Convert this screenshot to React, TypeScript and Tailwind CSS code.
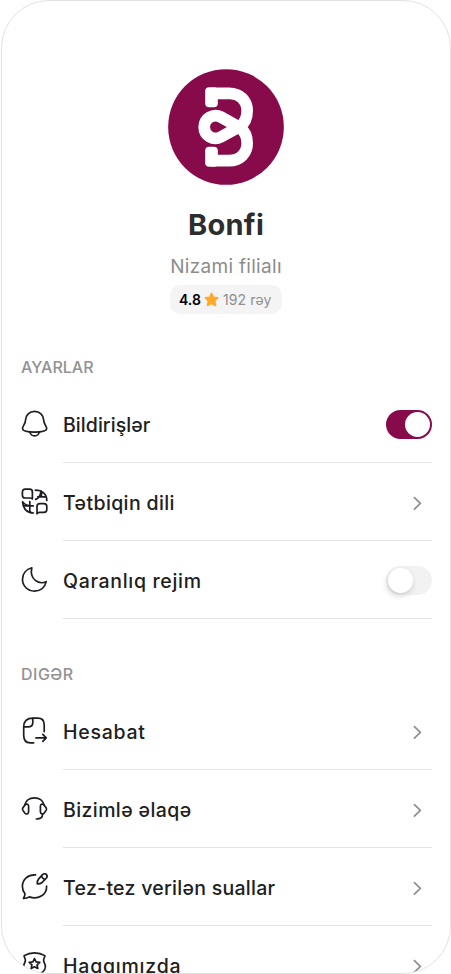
import type { ReactNode } from "react";

function Icon({ children }: { children: ReactNode }) {
  return (
    <svg
      className="h-7 w-7 shrink-0"
      viewBox="0 0 28 28"
      fill="none"
      stroke="#1c1c22"
      strokeWidth="1.7"
      strokeLinecap="round"
      strokeLinejoin="round"
    >
      {children}
    </svg>
  );
}

const BellIcon = () => (
  <Icon>
    <path d="M13.6 1.4C8.4 1.4 4.8 5.2 4.6 9.8C4.4 14.6 1.5 15.8 1.5 18.6C1.5 21.2 7 22.2 13.6 22.2S25.7 21.2 25.7 18.6C25.7 15.8 22.8 14.6 22.6 9.8C22.4 5.2 18.8 1.4 13.6 1.4Z" />
    <path d="M9 22.4C9.6 24.6 11.4 25.9 13.6 25.9S17.6 24.6 18.2 22.4" />
  </Icon>
);

const LanguageIcon = () => (
  <Icon>
    <path d="M4.2 1.2H8.6Q11.4 1.2 11.4 4V10.8Q10.4 10 9 10H4.2Q1.4 10 1.4 7.2V4Q1.4 1.2 4.2 1.2Z" />
    <path d="M14.4 2.2C21 2.2 25.8 6 25.8 12.4M14.6 11.4C17.6 10.2 19.6 7 20 2.8M16.8 8.8H24.6M20.4 3.4V8.8" />
    <path d="M1.6 13.8C1.6 20.4 6 25 12.4 25M1.8 13.8C3.6 17 6.6 18 12.2 18M8.8 13.6V24M2.8 17.8H12.2" />
    <path d="M18.8 15.6H23Q25.8 15.6 25.8 18.4V21.6Q25.8 24.4 23 24.4H18.6Q16.8 24.4 16 25.8V18.4Q16 15.6 18.8 15.6Z" />
  </Icon>
);

const MoonIcon = () => (
  <Icon>
    <path d="M10.8 1.8C5.2 3.3 1.5 7.8 1.5 13.3C1.5 20.1 6.8 25.1 13.4 25.1C19.4 25.1 24 21.5 25.2 15.7C18 18.9 8.2 13.7 10.8 1.8Z" />
  </Icon>
);

const ReportIcon = () => (
  <Icon>
    <path d="M23.2 14.6V7.8C23.2 3 21.4 1.2 16.8 1.2H12C6 1.2 2.7 4.2 2.7 10.2V18C2.7 23.4 4.6 25.9 9.2 25.9H12.6" />
    <path d="M11.8 1.4V5.4C11.8 8.4 10.2 9.8 7 9.8H2.9" />
    <path d="M15 20.9H25M21.8 17.4L25.2 20.9L21.8 24.4" />
  </Icon>
);

const HeadsetIcon = () => (
  <Icon>
    <path d="M3.8 9.7C4.8 5.6 8.6 2.8 13.4 2.8S22 5.6 23 9.7" />
    <path d="M7.6 11.2C7.6 8.8 5 8.4 3.6 10.4L1.8 13C1.4 13.7 1.4 14.4 1.8 15.1L3.6 17.8C5 19.8 7.6 19.2 7.6 16.8Z" />
    <path d="M19.4 11.2C19.4 8.8 22 8.4 23.4 10.4L25.2 13C25.6 13.7 25.6 14.4 25.2 15.1L23.4 17.8C22 19.8 19.4 19.2 19.4 16.8Z" />
    <path d="M21.6 19.3C21.6 22.6 19.6 24 15.4 24" />
  </Icon>
);

const ChatIcon = () => (
  <Icon>
    <path d="M14.6 1.9C6.8 1.5 1.4 6.7 1.4 13.4C1.4 16.4 2.4 18.8 4 20.8C4 22.8 3.3 24 2.4 25.5C4.8 25.6 6.8 25 8.4 23.9C16.8 27.2 25.9 22 25.6 13.2" />
    <path d="M21.3 1.9C22.7.4 24.4.5 25.4 1.6C26.4 2.7 26.3 4.2 25 5.5L20.9 9.7C20 10.6 18.5 11 16.3 11C16.2 8.7 16.6 7.1 17.5 6.1ZM20.6 3.2C21.2 4.8 22.2 5.8 23.8 6.4" />
  </Icon>
);

const AboutIcon = () => (
  <Icon>
    <path d="M13.5 1.8C9.4 1.8 6.6 2.5 3.2 4.6C2.8 5.8 4.4 7.4 4.4 9.2C4.4 11.4 2.6 12.8 2.6 15.4C2.6 19.4 5.6 22.6 13.5 25.8C21.4 22.6 24.4 19.4 24.4 15.4C24.4 12.8 22.6 11.4 22.6 9.2C22.6 7.4 24.2 5.8 23.8 4.6C20.4 2.5 17.6 1.8 13.5 1.8Z" />
    <path d="M13.5 7.6L15.1 10.9L18.8 11.4L16.1 13.9L16.8 17.5L13.5 15.8L10.2 17.5L10.9 13.9L8.2 11.4L11.9 10.9Z" />
  </Icon>
);

function Chevron() {
  return (
    <svg
      className="mt-0.5 mr-2.5 h-4 w-[9px]"
      viewBox="0 0 9 16"
      fill="none"
      stroke="#8e8e8e"
      strokeWidth="1.7"
      strokeLinecap="round"
      strokeLinejoin="round"
    >
      <path d="M1.4 2.6L7.4 8.4L1.4 14.2" />
    </svg>
  );
}

function Toggle({ on }: { on: boolean }) {
  return on ? (
    <div className="mt-px flex h-[29px] w-[46px] items-center justify-end rounded-full bg-[#870b4b] pr-[2px]">
      <div className="h-[25px] w-[25px] rounded-full bg-white" />
    </div>
  ) : (
    <div className="mt-px flex h-[29px] w-[46px] items-center rounded-full bg-[#f2f2f2] pl-[2px]">
      <div className="h-[25px] w-[25px] rounded-full bg-white shadow-[-1px_3px_6px_rgba(0,0,0,0.16)]" />
    </div>
  );
}

function Row({
  icon,
  label,
  tracking,
  children,
}: {
  icon: ReactNode;
  label: string;
  tracking: string;
  children: ReactNode;
}) {
  return (
    <div className="flex h-[78px] shrink-0 items-stretch">
      <div className="flex w-[42px] shrink-0 items-center">{icon}</div>
      <div className="flex grow items-center justify-between border-b border-[#e4e4e4]">
        <span className={`pt-0.5 text-[19.5px] leading-6 font-medium whitespace-nowrap ${tracking}`}>{label}</span>
        {children}
      </div>
    </div>
  );
}

function BrandMark() {
  return (
    <svg className="h-[132px] w-[132px]" viewBox="0 0 396 396">
      <circle cx="198" cy="201" r="173.5" fill="#870b4b" />
      <g fill="#fff">
        <rect x="135.5" y="81.5" width="38" height="60" rx="12" />
        <rect x="135.5" y="260.5" width="38" height="60" rx="12" />
      </g>
      <path
        d="M155 100H207C240 100 261.5 122 261.5 152C261.5 172 254 189 240 199L182.5 231A34 34 0 1 1 182.5 171L240 203C254 213 261.5 230 261.5 250C261.5 280 240 302 207 302H155"
        fill="none"
        stroke="#fff"
        strokeWidth="35"
        strokeLinejoin="round"
      />
    </svg>
  );
}

export default function App() {
  return (
    <div className="h-[974px] w-[451px] overflow-hidden bg-white pl-px font-['Inter','Noto_Sans',sans-serif] text-[#202020]">
      <main className="flex h-[974px] w-[450px] flex-col overflow-hidden rounded-[48px] border border-[#e2e2e2] bg-white pr-[18px] pl-[19px]">
        <header className="-ml-px flex h-[284px] shrink-0 flex-col items-center pt-[59px]">
          <BrandMark />
        </header>
        <div className="-mt-[80px] -ml-px flex shrink-0 flex-col items-center">
          <h1 className="text-[29px] leading-[40px] font-bold tracking-[0.3px] text-[#2d2d2d]">Bonfi</h1>
          <p className="mt-[10px] text-[19px] leading-6 tracking-[0.3px] text-[#8c8c8c]">Nizami filialı</p>
          <div className="mt-[6px] flex h-[29px] w-[112px] items-center gap-1 rounded-[10px] bg-[#f4f4f4] pl-[9px]">
            <span className="w-[22px] text-[14px] leading-5 font-semibold text-black">4.8</span>
            <svg className="-ml-px h-[15px] w-[15px]" viewBox="0 0 24 24" fill="#ffa928" stroke="#ffa928" strokeWidth="2.5" strokeLinejoin="round">
              <path d="M12 2L15 8.5L22 9.3L17 14.2L18.5 21.5L12 18L5.5 21.5L7 14.2L2 9.3L9 8.5Z" />
            </svg>
            <span className="text-[14px] leading-5 tracking-[0.1px] whitespace-nowrap text-[#8e8e8e]">192 rəy</span>
          </div>
        </div>
        <section className="mt-[41px] shrink-0">
          <h2 className="h-[30px] text-[16px] leading-6 font-medium text-[#929292]">AYARLAR</h2>
          <Row icon={<BellIcon />} label="Bildirişlər" tracking="tracking-[0.05px]">
            <Toggle on />
          </Row>
          <Row icon={<LanguageIcon />} label="Tətbiqin dili" tracking="tracking-[0.38px]">
            <Chevron />
          </Row>
          <Row icon={<MoonIcon />} label="Qaranlıq rejim" tracking="tracking-[0.68px]">
            <Toggle on={false} />
          </Row>
        </section>
        <section className="mt-[43px] shrink-0">
          <h2 className="h-[30px] text-[16px] leading-6 font-medium tracking-[0.5px] text-[#929292]">DIGƏR</h2>
          <Row icon={<ReportIcon />} label="Hesabat" tracking="tracking-[0.74px]">
            <Chevron />
          </Row>
          <Row icon={<HeadsetIcon />} label="Bizimlə əlaqə" tracking="tracking-[0.4px]">
            <Chevron />
          </Row>
          <Row icon={<ChatIcon />} label="Tez-tez verilən suallar" tracking="tracking-[0.28px]">
            <Chevron />
          </Row>
          <Row icon={<AboutIcon />} label="Haqqımızda" tracking="tracking-[0.78px]">
            <Chevron />
          </Row>
        </section>
      </main>
    </div>
  );
}
